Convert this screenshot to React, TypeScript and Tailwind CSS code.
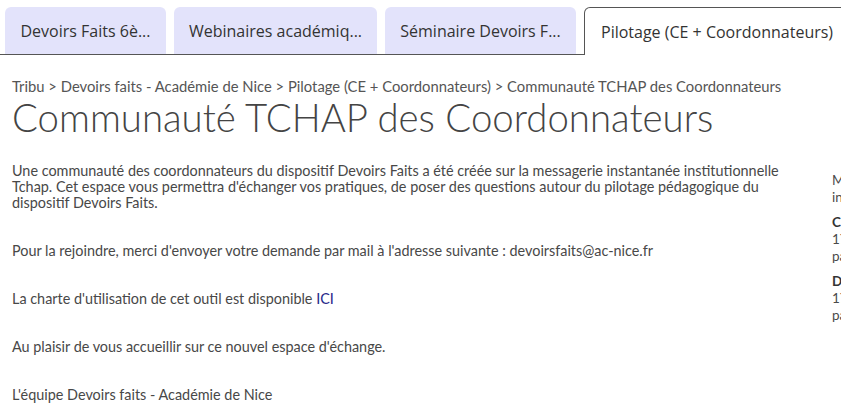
import React from 'react';

const tabs = [
  { label: 'Devoirs Faits 6è...', width: 'w-[161px]' },
  { label: 'Webinaires académiq...', width: 'w-[203px]' },
  { label: 'Séminaire Devoirs F...', width: 'w-[191px]' },
];

const bodyFont = { fontFamily: 'Lato, "Open Sans", sans-serif' };

export default function App() {
  return (
    <div className="w-[841px] h-[405px] overflow-hidden bg-white text-[#4a4a4a]">
      {/* Tab bar */}
      <div
        className="flex items-end gap-2 pl-[5px] pt-[7px] border-b border-[#555]"
        style={{ fontFamily: '"Open Sans", "Noto Sans", sans-serif' }}
      >
        {tabs.map((t) => (
          <div
            key={t.label}
            className={`${t.width} shrink-0 h-[47px] flex items-center justify-center bg-[#e3e3fb] rounded-t-md text-[16px] text-[#333] whitespace-nowrap`}
          >
            {t.label}
          </div>
        ))}
        <div className="shrink-0 h-[48px] -mb-px pl-4 pr-6 flex items-center bg-white border border-b-0 border-[#555] rounded-tl-md text-[16px] text-[#333] whitespace-nowrap">
          Pilotage (CE + Coordonnateurs)
        </div>
      </div>

      <div className="flex gap-3 pl-3" style={bodyFont}>
        {/* Main column */}
        <div className="w-[808px] shrink-0">
          <div className="mt-[22px] text-[14.8px] leading-[18px] text-[#555] whitespace-nowrap">
            Tribu &gt; Devoirs faits - Académie de Nice &gt; Pilotage (CE + Coordonnateurs) &gt; Communauté TCHAP des Coordonnateurs
          </div>
          <h1 className="mt-[2px] text-[38.4px] leading-[40px] font-light text-[#444]">
            Communauté TCHAP des Coordonnateurs
          </h1>

          <div className="mt-[26px] w-[790px] text-[14.4px] leading-[16px] text-[#484848]">
            <p>
              Une communauté des coordonnateurs du dispositif Devoirs Faits a été créée sur la messagerie instantanée institutionnelle Tchap. Cet espace vous permettra d'échanger vos pratiques, de poser des questions autour du pilotage pédagogique du dispositif Devoirs Faits.
            </p>
            <p className="mt-8">
              Pour la rejoindre, merci d'envoyer votre demande par mail à l'adresse suivante : devoirsfaits@ac-nice.fr
            </p>
            <p className="mt-8">
              La charte d'utilisation de cet outil est disponible <a className="text-[#27278a]">ICI</a>
            </p>
            <p className="mt-8">Au plaisir de vous accueillir sur ce nouvel espace d'échange.</p>
            <p className="mt-8">L'équipe Devoirs faits - Académie de Nice</p>
          </div>
        </div>

        {/* Side column */}
        <div className="pt-[117px] text-[13.5px] leading-[17px] text-[#4a4a4a] whitespace-nowrap">
          <p>Mise à jour</p>
          <p>information</p>
          <p className="mt-2 font-bold text-[#333]">Création</p>
          <p>17/01/2024</p>
          <p>par</p>
          <p className="mt-2 font-bold text-[#333]">Dernière</p>
          <p>17/01/2024</p>
          <p>par</p>
        </div>
      </div>
    </div>
  );
}
